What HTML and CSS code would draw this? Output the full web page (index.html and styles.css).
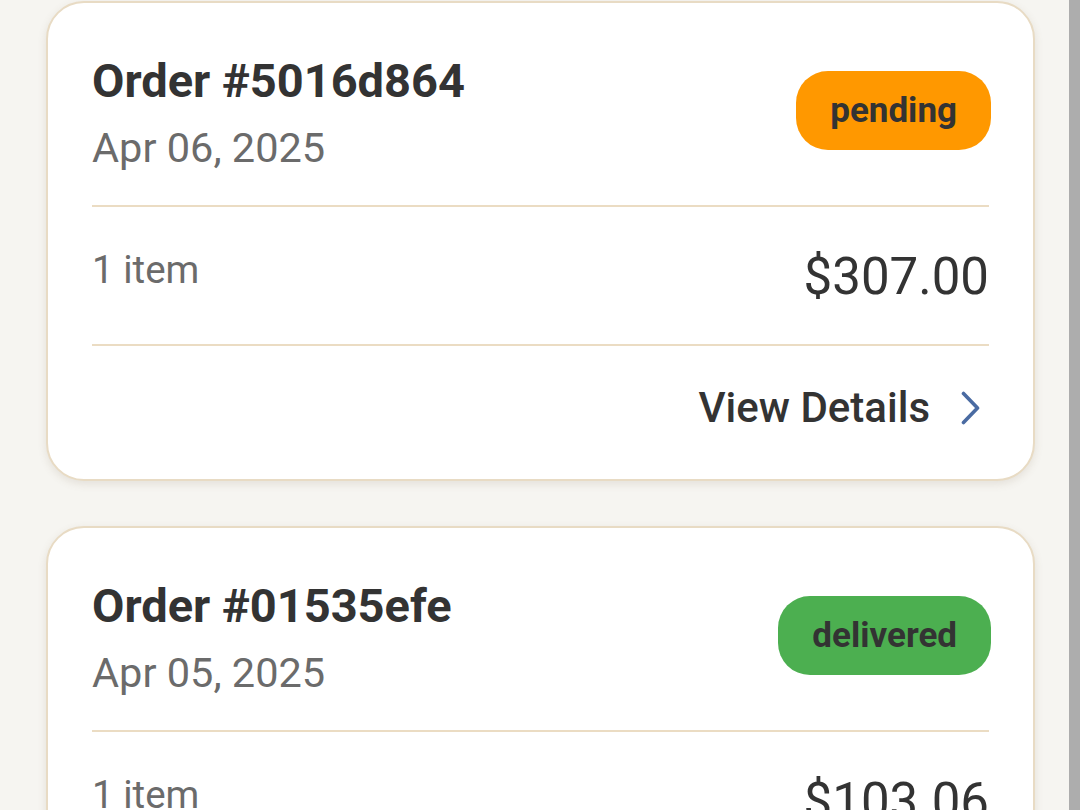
FILE: index.html
```html
<!DOCTYPE html>
<html>
<head>
<meta charset="utf-8">
<link rel="stylesheet" href="styles.css">
</head>
<body>
<main class="list">
  <article class="card">
    <header class="card-head">
      <div class="card-title">
        <h2 class="order-no">Order #5016d864</h2>
        <div class="order-date">Apr 06, 2025</div>
      </div>
      <span class="badge badge-pending">pending</span>
    </header>
    <div class="card-row">
      <span class="items">1 item</span>
      <span class="total">$307.00</span>
    </div>
    <div class="card-foot">
      <span class="details">View Details</span>
      <svg class="chev" width="30" height="36" viewBox="0 0 30 36"><path d="M2.5 3.5 L16.5 18 L2.5 32.5" fill="none" stroke="#4a6ba2" stroke-width="3.6" stroke-linecap="round" stroke-linejoin="round"/></svg>
    </div>
  </article>
  <article class="card">
    <header class="card-head">
      <div class="card-title">
        <h2 class="order-no">Order #01535efe</h2>
        <div class="order-date">Apr 05, 2025</div>
      </div>
      <span class="badge badge-delivered">delivered</span>
    </header>
    <div class="card-row">
      <span class="items">1 item</span>
      <span class="total">$103.06</span>
    </div>
    <div class="card-foot">
      <span class="details">View Details</span>
      <svg class="chev" width="30" height="36" viewBox="0 0 30 36"><path d="M2.5 3.5 L16.5 18 L2.5 32.5" fill="none" stroke="#4a6ba2" stroke-width="3.6" stroke-linecap="round" stroke-linejoin="round"/></svg>
    </div>
  </article>
</main>
<div class="scrollbar"></div>
</body>
</html>
```
FILE: styles.css
```css
html, body {
  margin: 0;
  padding: 0;
  height: 100%;
  overflow: hidden;
}
body {
  background: #f6f5f1;
  font-family: Roboto, "Noto Sans", sans-serif;
  color: #333;
}
.list {
  display: flex;
  flex-direction: column;
  gap: 45px;
  padding: 1px 45px 0 46px;
}
.card {
  background: #fff;
  border: 2px solid #e8dbc4;
  border-radius: 38px;
  box-shadow: 0 3px 9px rgba(120, 100, 70, 0.14);
  padding: 50px 44px 0 44px;
}
.card-head {
  display: flex;
  justify-content: space-between;
  align-items: center;
  padding-bottom: 32px;
  border-bottom: 2px solid #ebdcc3;
}
.order-no {
  margin: 0;
  font-size: 47px;
  line-height: 56px;
  font-weight: 700;
  color: #333;
}
.order-date {
  margin-top: 14px;
  font-size: 41.5px;
  line-height: 50px;
  color: #6b6b6b;
}
.badge {
  font-size: 35px;
  line-height: 41px;
  font-weight: 700;
  color: #333;
  padding: 19px 34px;
  border-radius: 32px;
  margin-top: -6px;
  margin-right: -2px;
}
.badge-pending { background: #ff9800; }
.badge-delivered { background: #4caf50; }
.card-row {
  display: flex;
  justify-content: space-between;
  align-items: flex-start;
  padding: 39px 0 37px 0;
  border-bottom: 2px solid #ebdcc3;
}
.items {
  font-size: 38.5px;
  line-height: 47px;
  color: #6b6b6b;
}
.total {
  font-size: 51px;
  line-height: 61px;
  color: #333;
}
.card-foot {
  display: flex;
  justify-content: flex-end;
  align-items: center;
  padding: 37px 0 46px 0;
}
.details {
  font-size: 42px;
  line-height: 50px;
  font-weight: 500;
  color: #333;
}
.chev {
  margin-left: 31px;
  margin-right: -2px;
  display: block;
}
.scrollbar {
  position: absolute;
  top: 0;
  right: 0;
  width: 11px;
  height: 100%;
  background: #adadad;
}
```
